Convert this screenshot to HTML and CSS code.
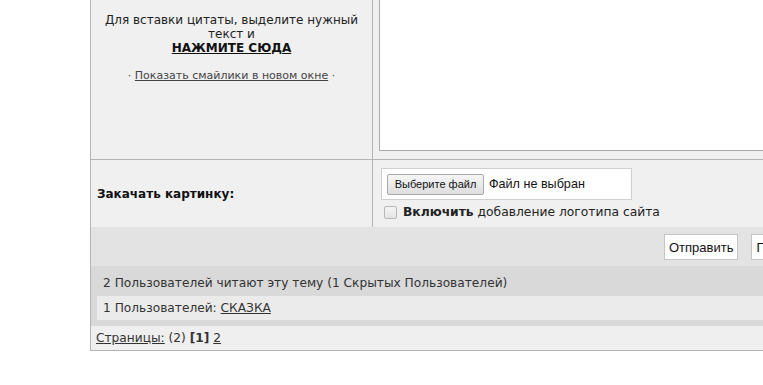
FILE: index.html
```html
<!DOCTYPE html>
<html lang="ru">
<head>
<meta charset="utf-8">
<title>Ответ</title>
<link rel="stylesheet" href="styles.css">
</head>
<body>
<div class="board">
  <div class="row post">
    <div class="cell side quote">
      <p class="hint">Для вставки цитаты, выделите нужный текст и<br><a class="strong-link" href="#">НАЖМИТЕ СЮДА</a></p>
      <p class="smiles">· <a href="#">Показать смайлики в новом окне</a> ·</p>
    </div>
    <div class="cell main">
      <div class="textarea"></div>
    </div>
  </div>
  <div class="row upload">
    <div class="cell side label">Закачать картинку:</div>
    <div class="cell main">
      <div class="filebox"><span class="filebtn">Выберите файл</span><span class="filename">Файл не выбран</span></div>
      <label class="check"><span class="box"></span><span><b>Включить</b> добавление логотипа сайта</span></label>
    </div>
  </div>
  <div class="row actions">
    <span class="btn">Отправить</span>
    <span class="btn">Предварительный просмотр</span>
  </div>
  <div class="readers">
    <div class="readers-title">2 Пользователей читают эту тему (1 Скрытых Пользователей)</div>
    <div class="readers-list">1 Пользователей: <a href="#">СКАЗКА</a></div>
  </div>
  <div class="pages"><a href="#">Страницы:</a> (2) <b>[1]</b> <a href="#">2</a></div>
</div>
</body>
</html>
```
FILE: styles.css
```css
*, *::before, *::after { box-sizing: border-box; }
html, body {
  margin: 0;
  padding: 0;
  overflow: hidden;
  background: #ffffff;
}
body {
  font-family: "DejaVu Sans", Verdana, sans-serif;
  font-size: 12px;
  color: #222;
  width: 763px;
  height: 385px;
}
a { color: #222; }
.board {
  margin-left: 90px;
  width: 760px;
  border-left: 1px solid #b4b4b4;
  border-bottom: 1px solid #b4b4b4;
}
.row {
  display: flex;
}
.cell.side {
  width: 282px;
  flex: none;
  background: #f0f0f0;
  border-right: 1px solid #b4b4b4;
}
.cell.main {
  flex: 1;
  background: #f0f0f0;
}
.post {
  border-bottom: 1px solid #b4b4b4;
}
.quote {
  text-align: center;
  padding-top: 13px;
}
.hint {
  margin: 0;
  line-height: 14px;
  padding: 0 10px;
}
.strong-link {
  font-weight: bold;
  color: #111;
}
.smiles {
  margin: 14px 0 0;
  font-size: 11px;
  color: #444;
}
.smiles a { color: #444; }
.post .cell.main {
  padding: 0 0 8px 6px;
}
.textarea {
  height: 151px;
  background: #fff;
  border: 1px solid #aaa;
  border-top: none;
  border-right: none;
}
.upload {
  height: 67px;
}
.label {
  display: flex;
  align-items: center;
  padding-left: 6px;
  font-weight: bold;
  color: #111;
}
.upload .cell.main {
  padding: 8px 0 0 8px;
}
.filebox {
  width: 251px;
  height: 32px;
  background: #fff;
  border: 1px solid #cfcfcf;
  display: flex;
  align-items: center;
  padding-left: 5px;
  font-family: "Liberation Sans", Arial, sans-serif;
  font-size: 12.6px;
}
.filebtn {
  height: 21px;
  width: 97px;
  border: 1px solid #a9a9a9;
  border-radius: 2px;
  background: linear-gradient(#f6f6f6, #dedede);
  font-size: 11px;
  display: flex;
  align-items: center;
  justify-content: center;
  color: #111;
}
.filename {
  margin-left: 5px;
  color: #111;
}
.check {
  display: flex;
  align-items: center;
  margin-top: 5px;
  margin-left: 3px;
  font-size: 12.3px;
  color: #222;
}
.box {
  width: 13px;
  height: 13px;
  border: 1px solid #b8b8b8;
  border-radius: 2px;
  background: linear-gradient(#f4f4f4, #e4e4e4);
  margin-right: 6px;
}
.actions {
  background: #e3e3e3;
  height: 39px;
  align-items: flex-start;
  padding: 7px 0 0 573px;
  gap: 13px;
}
.btn {
  flex: none;
  height: 26px;
  padding: 0 4px;
  background: #fff;
  border: 1px solid #c4c4c4;
  display: flex;
  align-items: center;
  font-family: "Liberation Sans", Arial, sans-serif;
  font-size: 13px;
  color: #111;
}
.readers {
  background: #d9d9d9;
  padding: 0 0 6px 6px;
}
.readers-title {
  height: 30px;
  line-height: 30px;
  padding: 2px 0 0 6px;
  font-size: 12.2px;
  color: #333;
}
.readers-list {
  height: 24px;
  line-height: 24px;
  background: #ebebeb;
  padding-left: 6px;
  font-size: 12.2px;
  color: #333;
}
.readers-list a { color: #333; }
.pages {
  height: 24px;
  line-height: 24px;
  background: #efefef;
  padding-left: 5px;
  font-size: 12.2px;
  color: #333;
}
.pages a { color: #333; }
```
